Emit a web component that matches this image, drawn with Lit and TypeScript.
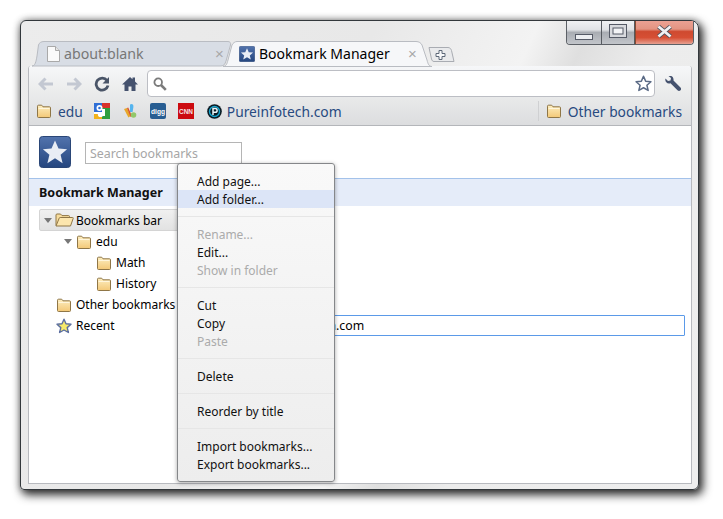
import { LitElement, html, css } from "lit";
import { customElement } from "lit/decorators.js";

const folder = (w = 16, h = 14) => html`<svg class="ic" width=${w} height=${h} viewBox="0 0 16 14"><defs><linearGradient id="fg" x1="0" y1="0" x2="0" y2="1"><stop offset="0" stop-color="#fdeec0"/><stop offset="1" stop-color="#f3c877"/></linearGradient></defs><path d="M1.500 12.500V2.200q0-1 1-1h3.200l1.300 1.600h6.500q1 0 1 1v8.700q0 1-1 1H2.500q-1 0-1-1z" fill="url(#fg)" stroke="#8f7647" stroke-width="1"/><path d="M2.500 4.500h11" stroke="#fff6dc" stroke-width="1"/></svg>`;
const folderOpen = html`<svg class="ic" width="19" height="14" viewBox="0 0 19 14"><path d="M1 12.500V2q0-1 1-1h3.500L7 2.600h6.500q1 0 1 1V5" fill="#f7dc9c" stroke="#8f7647"/><path d="M1 13 4.200 5.200q.2-.7 1-.7h12.300q1 0 .7.900L15.500 13z" fill="#fce6ae" stroke="#8f7647" stroke-linejoin="round"/></svg>`;
const star = (fill: string, stroke: string, s = 16) => html`<svg class="ic" width=${s} height=${s} viewBox="0 0 16 16"><path d="M8 1.200l2 4.600 5 .5-3.800 3.300 1.200 4.900L8 12l-4.400 2.500 1.200-4.900L1 6.300l5-.5z" fill=${fill} stroke=${stroke} stroke-width="1.400" stroke-linejoin="round"/></svg>`;
const logo = (s: number) => html`<svg class="ic" width=${s} height=${s} viewBox="0 0 32 32"><defs><linearGradient id="lg" x1="0" y1="0" x2="0" y2="1"><stop offset="0" stop-color="#5273ad"/><stop offset="1" stop-color="#25467f"/></linearGradient></defs><rect x=".5" y=".5" width="31" height="31" rx="3" fill="url(#lg)" stroke="#2a4677"/><path d="M16 4.500l3.500 8 8.600.7-6.500 5.600 2 8.400L16 22.300l-7.600 4.900 2-8.400-6.500-5.600 8.600-.7z" fill="#e9edf5"/></svg>`;
const arrowBack = html`<svg class="ic" width="16" height="14" viewBox="0 0 16 14"><path d="M7.500 1.500 2 7l5.500 5.500M2.500 7H15" fill="none" stroke="#c3c8d2" stroke-width="3"/></svg>`;
const arrowFwd = html`<svg class="ic" width="16" height="14" viewBox="0 0 16 14"><path d="M8.500 1.500 14 7l-5.500 5.500M13.500 7H1" fill="none" stroke="#c3c8d2" stroke-width="3"/></svg>`;
const page = html`<svg class="ic" width="13" height="16" viewBox="0 0 13 16"><path d="M.5.5h8l4 4v11H.5z" fill="#fafafa" stroke="#a9a9a9"/><path d="M8.500.5v4h4" fill="#e6e6e6" stroke="#a9a9a9"/></svg>`;
const tri = html`<svg class="ic" width="8" height="5" viewBox="0 0 8 5"><path d="M0 0h8L4 5z" fill="#777"/></svg>`;

const favGoogle = html`<svg class="ic" width="16" height="16" viewBox="0 0 16 16"><rect width="16" height="16" rx="1" fill="#fff"/><rect x="0" y="0" width="8" height="9" fill="#2f6fd6"/><rect x="8" y="0" width="8" height="5" fill="#d8322a"/><rect x="8" y="5" width="8" height="11" fill="#2e9e3f"/><rect x="0" y="11" width="8" height="5" fill="#f2b21b"/><circle cx="5.500" cy="5" r="3" fill="#fff"/><circle cx="5.500" cy="5" r="1.300" fill="#2f6fd6"/><circle cx="6.500" cy="11.500" r="2.600" fill="#fff"/><rect x="8" y="6" width="3" height="7" fill="#fff"/></svg>`;
const favDel = html`<svg class="ic" width="14" height="16" viewBox="0 0 14 16"><path d="M7 1.500c2-1.500 3.700 0 3.400 2.500L9.600 9H7z" fill="#55b4ee"/><path d="M1 6l3-1 3.600 8-2.200 1.500z" fill="#e8a72b"/><path d="M4 5l1.200-.5L9 13l-1.500 1z" fill="#d8532f"/><circle cx="10.500" cy="12" r="2.800" fill="#93c76a"/></svg>`;
const favDigg = html`<svg class="ic" width="16" height="16" viewBox="0 0 16 16"><rect width="16" height="16" rx="2" fill="#275d92"/><text x="8" y="10.500" text-anchor="middle" font-size="6.600" font-weight="700" font-family="Liberation Sans" fill="#fff">digg</text></svg>`;
const favCnn = html`<svg class="ic" width="16" height="16" viewBox="0 0 16 16"><rect width="16" height="16" fill="#cc0a0f"/><text x="8" y="10.500" text-anchor="middle" font-size="6.400" font-weight="700" font-family="Liberation Sans" fill="#f6e4e4">CNN</text></svg>`;
const favP = html`<svg class="ic" width="15" height="15" viewBox="0 0 15 15"><circle cx="7.500" cy="7.500" r="7.300" fill="#0b1a22"/><circle cx="7.500" cy="7.500" r="5" fill="none" stroke="#16a6cf" stroke-width="1.400"/><path d="M6 11V4.500h2.200a1.900 1.900 0 0 1 0 3.800H6" fill="none" stroke="#e9f6fa" stroke-width="1.500"/></svg>`;

type Item = { t?: string; off?: boolean; hi?: boolean };
const menu: Item[] = [
  { t: "Add page..." }, { t: "Add folder...", hi: true }, {},
  { t: "Rename...", off: true }, { t: "Edit..." }, { t: "Show in folder", off: true }, {},
  { t: "Cut" }, { t: "Copy" }, { t: "Paste", off: true }, {},
  { t: "Delete" }, {},
  { t: "Reorder by title" }, {},
  { t: "Import bookmarks..." }, { t: "Export bookmarks..." },
];

const tree = [
  { d: 0, tw: tri, ic: folderOpen, t: "Bookmarks bar", sel: true },
  { d: 1, tw: tri, ic: folder(16, 14), t: "edu" },
  { d: 2, ic: folder(16, 14), t: "Math" },
  { d: 2, ic: folder(16, 14), t: "History" },
  { d: 0, ic: folder(16, 14), t: "Other bookmarks" },
  { d: 0, ic: star("#f5e96a", "#5b6ea0", 16), t: "Recent" },
];

@customElement("app-root")
export class AppRoot extends LitElement {
  static styles = css`
    :host { display: block; width: 723px; height: 519px; background: #fff; overflow: hidden; font-family: "Noto Sans", sans-serif; }
    .ic { display: block; flex: none; }
    .stage { padding: 20px 24px 29px 20px; height: 519px; box-sizing: border-box; }
    .window { position: relative; height: 100%; box-sizing: border-box; border: 1px solid #33383c; border-radius: 6px 8px 6px 4px;
      background: linear-gradient(115deg, #ececec 0%, #e8e8e8 40%, #f3f3f3 58%, #dfdfdf 64%, #ececec 72%, #eeeeee 100%);
      box-shadow: 3px 4px 10px 1px rgba(0,0,0,.8), 0 0 7px rgba(0,0,0,.3); padding: 20px 6px 5px 7px; display: flex; flex-direction: column; }
    .controls { position: absolute; top: 0; right: 4px; width: 128px; height: 24px; display: flex; box-sizing: border-box;
      border: 1px solid #5c6066; border-top: none; border-radius: 0 0 4px 4px; overflow: hidden; }
    .ctl { display: flex; align-items: center; justify-content: center; background: linear-gradient(#f0f1f3 0%, #e0e2e5 38%, #a9adb3 50%, #c2c5ca 100%); border-right: 1px solid #565a60; box-sizing: border-box; }
    .ctl.min { width: 35px; align-items: flex-end; padding-bottom: 4px; }
    .ctl.max { width: 33px; padding-bottom: 3px; }
    .ctl.close { flex: 1; border-right: none; border-left: 1px solid #8a4a30; padding-bottom: 2px; background: linear-gradient(#eba193 0%, #e39482 35%, #cf4a30 46%, #d64f34 72%, #e6a091 100%); }
    .tabs { display: flex; height: 25px; align-items: flex-end; padding-left: 1px; flex: none; }
    .tab { position: relative; height: 25px; flex: none; display: flex; align-items: center; box-sizing: border-box; font-size: 14px; }
    .tab.one { width: 195px; padding-left: 18px; color: #777; font-size: 14.200px; }
    .tab.two { width: 208px; padding-left: 15px; color: #000; }
    .tab .shape { position: absolute; left: 0; top: 0; overflow: visible; }
    .tab > :not(.shape) { position: relative; }
    .tab .label { margin-left: 4px; flex: 1; white-space: nowrap; }
    .tab .x { font-size: 15px; color: #a8a8a8; font-family: "Liberation Sans", sans-serif; }
    .tab.one .x { width: 9px; }
    .tab.two .x { width: 24px; }
    .newtab { flex: none; margin: 0 0 3px -4px; }
    .chrome { flex: 1; min-height: 0; display: flex; flex-direction: column; border: 1px solid #b8babf; border-top: none; border-radius: 3px 3px 0 0; background: #fff; }
    .bars { background: linear-gradient(#f6f7f9 0%, #eceded 40%, #dcdddf 100%); border-bottom: 1px solid #b4b6ba; border-radius: 3px 3px 0 0; height: 60px; flex: none; box-sizing: border-box; }
    .toolbar { display: flex; align-items: center; height: 31px; padding: 4px 0 0 9px; box-sizing: border-box; }
    .toolbar .nav { width: 28px; display: flex; }
    .omni { width: 508px; height: 27px; box-sizing: border-box; margin-left: -3px; background: #fff; border: 1px solid #bcbec4; border-radius: 4px; display: flex; align-items: center; justify-content: space-between; padding: 0 2px 0 5px; }
    .wrench { margin-left: 9px; }
    .bmbar { display: flex; align-items: center; height: 28px; padding: 0 9px 0 7px; font-size: 13.800px; color: #274a80; }
    .bm { display: flex; align-items: center; white-space: nowrap; }
    .bm .folder { margin-right: 6px; }
    .spacer { flex: 1; }
    .vsep { width: 1px; height: 20px; background: #cfd0d2; margin-right: 7px; }
    .gap5 { width: 5px; } .gap11 { width: 11px; } .gap12 { width: 12px; } .gap13 { width: 13px; }
    .top { display: flex; align-items: flex-start; height: 52px; padding: 10px 0 0 10px; box-sizing: border-box; flex: none; }
    .search { width: 157px; height: 22px; margin: 6px 0 0 14px; box-sizing: border-box; border: 1px solid #b5b5b5; padding: 0 4px; display: flex; align-items: center; font-size: 12.400px; color: #a6a6a6; white-space: nowrap; }
    .hdr { height: 28px; box-sizing: border-box; border-top: 1px solid #a3c2ea; background: #e5ecf9; padding-left: 10px; font-weight: 700; font-size: 12.500px; line-height: 28px; color: #111; flex: none; }
    .main { flex: 1; display: flex; min-height: 0; padding-top: 3px; }
    .tree { width: 160px; flex: none; padding-left: 10px; font-size: 12px; color: #000; }
    .row { display: flex; align-items: center; height: 21px; white-space: nowrap; width: 200px; box-sizing: border-box; }
    .row.sel { height: 22px; background: linear-gradient(#f0f0f0,#e2e2e2); border: 1px solid #d4d4d4; border-radius: 2px; }
    .twist { width: 12px; flex: none; display: flex; justify-content: flex-start; box-sizing: border-box; }
    .row.sel .twist { padding-left: 1px; }
    .row .text { margin-left: 4px; }
    .row.sel .text { margin-left: 2px; }
    .list { flex: 1; padding: 106px 6px 0 0; min-width: 0; }
    .edit { height: 21px; box-sizing: border-box; border: 1px solid #5b9ae8; border-radius: 1px; font-size: 12.300px; line-height: 19px; padding-left: 30px; color: #000; white-space: nowrap; }
    .menu { position: absolute; left: 156px; top: 142px; width: 158px; height: 319px; box-sizing: border-box; border: 1px solid #85878a; border-radius: 3px; background: linear-gradient(#f9f9f9,#ededed); box-shadow: 0 1px 4px rgba(0,0,0,.35); padding: 8px 0 0; font-size: 12px; z-index: 2; }
    .mi { height: 18px; line-height: 20px; padding-left: 19px; color: #111; white-space: nowrap; }
    .mi.off { color: #ababab; }
    .mi.hi { background: #dce5f7; }
    .msep { height: 1px; margin: 8px 0 8px; background: #e6e6e6; }
  `;

  render() {
    return html`<div class="stage"><div class="window">
      <div class="controls">
        <div class="ctl min"><svg class="ic" width="18" height="6" viewBox="0 0 18 6"><rect x=".5" y=".5" width="17" height="5" fill="#eceef1" stroke="#555a66"/></svg></div>
        <div class="ctl max"><svg class="ic" width="18" height="14" viewBox="0 0 18 14"><rect x=".5" y=".5" width="17" height="13" fill="#d8dade" stroke="#555a66"/><rect x="4" y="4" width="10" height="6" fill="#f3f4f6" stroke="#555a66"/></svg></div>
        <div class="ctl close"><svg class="ic" width="17" height="13" viewBox="0 0 17 13"><path d="M2.500 1.500 14.500 11.500M14.500 1.500 2.500 11.500" stroke="#50545e" stroke-width="4.400"/><path d="M2.500 1.500 14.500 11.500M14.500 1.500 2.500 11.500" stroke="#f1f1f3" stroke-width="2.800"/></svg></div>
      </div>
      <div class="tabs">
        <div class="tab one">
          <svg class="shape" width="195" height="25" viewBox="0 0 195 25"><path d="M3 25C6 25 7 21 8 15L9.500 4C10 2 12 .5 15 .5H199C201 .5 202 2 201.500 4L197 20C196 23 195 25 192 25z" fill="#d8dde5" stroke="#b9bcc2"/></svg>
          ${page}<span class="label">about:blank</span><span class="x">×</span>
        </div>
        <div class="tab two">
          <svg class="shape" width="208" height="25" viewBox="0 0 208 25"><path d="M-1 25.500C2 25.500 3 23 4 19L8 4C9 2 11 .5 13 .5H192C195 .5 197 2 198 4L203 19C204 23 205 25.500 208 25.500z" fill="#f6f7f9" stroke="#b9bcc2"/></svg>
          ${logo(16)}<span class="label">Bookmark Manager</span><span class="x">×</span>
        </div>
        <svg class="ic newtab" width="27" height="17" viewBox="0 0 27 17"><path d="M1 1.500H20C22 1.500 23 3 23.500 4.500L26 15.500H6C4.500 15.500 4 14.500 3.500 13z" fill="#e9eaec" stroke="#a9acb2"/><path d="M11 4.500h3v3h3v3h-3v3h-3v-3H8v-3h3z" fill="#f7f8fa" stroke="#5d6878"/></svg>
      </div>
      <div class="chrome">
        <div class="bars">
          <div class="toolbar">
            <div class="nav">${arrowBack}</div>
            <div class="nav">${arrowFwd}</div>
            <div class="nav"><svg class="ic" width="16" height="16" viewBox="0 0 16 16"><path d="M13 4.500A6 6 0 1 0 14 9.500" fill="none" stroke="#4a5568" stroke-width="2.800"/><path d="M15 1v6.500H8.500z" fill="#4a5568"/></svg></div>
            <div class="nav"><svg class="ic" width="16" height="16" viewBox="0 0 16 16"><path d="M8 1 0 8.500h2.500V15h4v-4.500h3V15h4V8.500H16l-3-3V1.500h-2.500v1.700z" fill="#45526e"/></svg></div>
            <div class="omni">
              <svg class="ic" width="14" height="14" viewBox="0 0 14 14"><circle cx="5.200" cy="5.200" r="3.800" fill="#fff" stroke="#7b7b7b" stroke-width="1.800"/><path d="M8 8l4.800 4.800" stroke="#7b7b7b" stroke-width="2.600"/></svg>
              ${star("#fff", "#5a6a85", 17)}
            </div>
            <svg class="ic wrench" width="17" height="16" viewBox="0 0 17 16"><path d="M1.500 2.500 4 5l2.500-.5L7 2 4.500 0C7-1 10 1 9.500 4.500l7 7c.8 1 .8 1.800 0 2.800-1 1-2 1-3 0l-7-7C3 8.500.5 5.500 1.500 2.500z" fill="#45526e"/></svg>
          </div>
          <div class="bmbar">
            <div class="bm"><span class="folder">${folder(16, 14)}</span>edu</div>
            <span class="gap11"></span>${favGoogle}
            <span class="gap13"></span>${favDel}
            <span class="gap13"></span>${favDigg}
            <span class="gap12"></span>${favCnn}
            <span class="gap13"></span>${favP}
            <span class="gap5"></span><div class="bm">Pureinfotech.com</div>
            <div class="spacer"></div>
            <div class="vsep"></div>
            <div class="bm"><span class="folder">${folder(16, 14)}</span>Other bookmarks</div>
          </div>
        </div>
        <div class="top">
          ${logo(32)}
          <div class="search">Search bookmarks</div>
        </div>
        <div class="hdr">Bookmark Manager</div>
        <div class="main">
          <div class="tree">
            ${tree.map((r) => html`<div class="row ${r.sel ? "sel" : ""}" style="padding-left:${r.sel ? 3 : r.d * 20 + 5}px">
              <span class="twist">${r.tw ?? ""}</span>${r.ic}<span class="text">${r.t}</span></div>`)}
          </div>
          <div class="list"><div class="edit">www.pureinfotech.com</div></div>
        </div>
      </div>
      <div class="menu">
        ${menu.map((m) => m.t ? html`<div class="mi ${m.off ? "off" : ""} ${m.hi ? "hi" : ""}">${m.t}</div>` : html`<div class="msep"></div>`)}
      </div>
    </div></div>`;
  }
}
